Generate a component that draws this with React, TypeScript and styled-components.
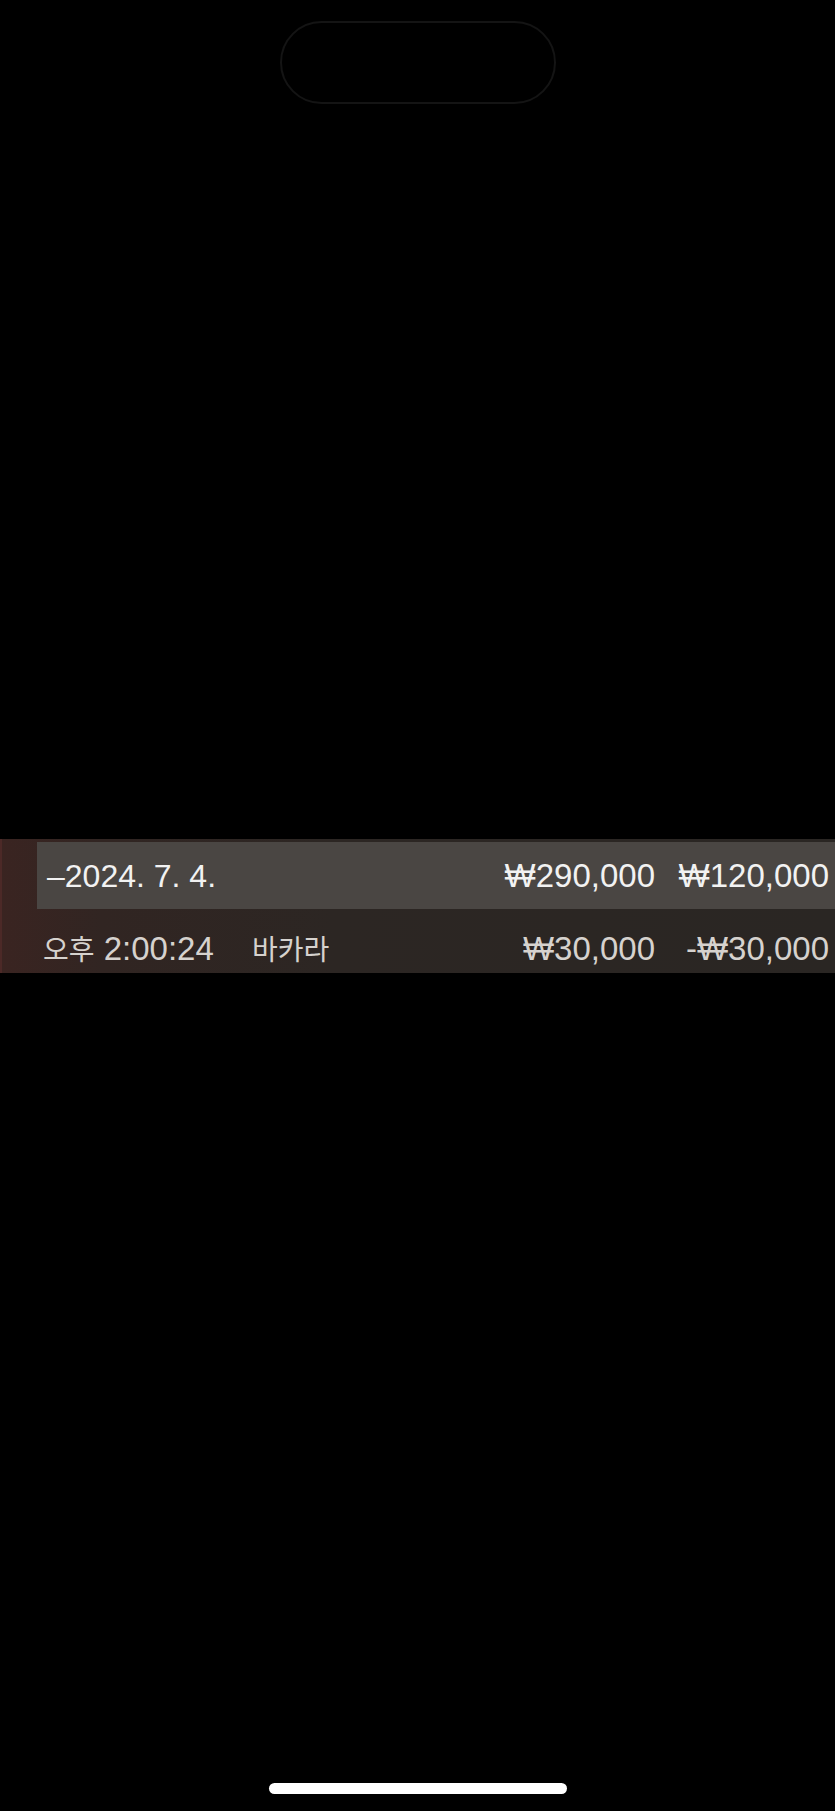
import React from "react";
import styled, { createGlobalStyle } from "styled-components";

const GlobalStyle = createGlobalStyle`
  html, body {
    margin: 0;
    padding: 0;
    background: #000;
  }
  body {
    font-family: "Liberation Sans", "Noto Sans CJK KR", sans-serif;
  }
`;

const Screen = styled.div`
  width: 835px;
  height: 1811px;
  background: #000;
  display: flex;
  flex-direction: column;
  align-items: stretch;
  overflow: hidden;
`;

const IslandRow = styled.div`
  display: flex;
  justify-content: center;
  padding-top: 21px;
  height: 818px;
  box-sizing: border-box;
`;

const Island = styled.div`
  width: 276px;
  height: 83px;
  box-sizing: border-box;
  border: 2px solid #141414;
  border-radius: 42px;
  background: #000;
`;

const Band = styled.div`
  margin-top: 21px;
  height: 134px;
  box-sizing: border-box;
  padding-top: 3px;
  border-left: 2px solid #4c2927;
  background: linear-gradient(
    90deg,
    #3a2421 0%,
    #312522 12%,
    #2c2623 40%,
    #2a2623 100%
  );
  display: flex;
  flex-direction: column;
`;

const Row = styled.div<{ $highlight?: boolean }>`
  display: flex;
  align-items: center;
  box-sizing: border-box;
  height: ${(p) => (p.$highlight ? "67px" : "64px")};
  margin-left: ${(p) => (p.$highlight ? "35px" : "0")};
  padding-left: ${(p) => (p.$highlight ? "10px" : "41px")};
  padding-right: 6px;
  padding-top: ${(p) => (p.$highlight ? "0" : "14px")};
  background: ${(p) => (p.$highlight ? "#4a4643" : "transparent")};
  color: ${(p) => (p.$highlight ? "#f2f2f2" : "#d6d2ce")};
  font-size: 33px;
  line-height: 1;
  white-space: nowrap;
`;

const DateLabel = styled.span`
  flex: 1;
  font-size: 32px;
`;

const TimeLabel = styled.span`
  width: 209px;
`;

const Hangul = styled.span`
  font-family: "Noto Sans CJK KR", sans-serif;
  font-size: 28px;
`;

const GameLabel = styled.span`
  flex: 1;
`;

const Amount = styled.span<{ $wide?: boolean }>`
  width: ${(p) => (p.$wide ? "174px" : "160px")};
  text-align: right;
`;

const HomeRow = styled.div`
  margin-top: auto;
  display: flex;
  justify-content: center;
  padding-bottom: 17px;
`;

const HomeIndicator = styled.div`
  width: 298px;
  height: 11px;
  border-radius: 6px;
  background: #fff;
`;

export default function App() {
  return (
    <>
      <GlobalStyle />
      <Screen>
        <IslandRow>
          <Island />
        </IslandRow>
        <Band>
          <Row $highlight>
            <DateLabel>–2024. 7. 4.</DateLabel>
            <Amount>₩290,000</Amount>
            <Amount $wide>₩120,000</Amount>
          </Row>
          <Row>
            <TimeLabel>
              <Hangul>오후</Hangul> 2:00:24
            </TimeLabel>
            <GameLabel>
              <Hangul>바카라</Hangul>
            </GameLabel>
            <Amount>₩30,000</Amount>
            <Amount $wide>-₩30,000</Amount>
          </Row>
        </Band>
        <HomeRow>
          <HomeIndicator />
        </HomeRow>
      </Screen>
    </>
  );
}
